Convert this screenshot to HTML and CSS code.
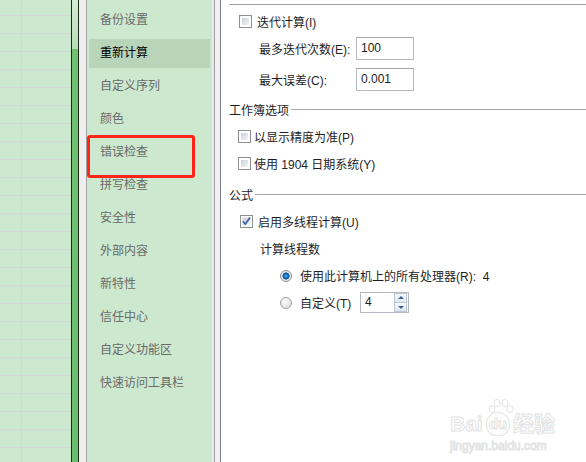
FILE: index.html
```html
<!DOCTYPE html>
<html>
<head>
  <meta charset="utf-8">
  <title>Excel 选项 - 公式</title>
  <link rel="stylesheet" href="styles.css">
</head>
<body>
  <div class="window">
    <!-- worksheet behind the dialog -->
    <div class="sheet"></div>
    <div class="splitter"></div>
    <div class="rail"></div>

    <ul class="nav">
      <li>备份设置</li>
      <li class="active">重新计算</li>
      <li>自定义序列</li>
      <li>颜色</li>
      <li>错误检查</li>
      <li>拼写检查</li>
      <li>安全性</li>
      <li>外部内容</li>
      <li>新特性</li>
      <li>信任中心</li>
      <li>自定义功能区</li>
      <li>快速访问工具栏</li>
      <li class="mark"></li>
    </ul>

    <div class="gutter"></div>

    <div class="content">
      <div class="rule"></div>

      <div class="row lead">
        <span class="box"></span>
        <span class="label-gap">迭代计算(I)</span>
      </div>
      <div class="row field">
        <span class="field-label">最多迭代次数(E):</span>
        <span class="text-input">100</span>
      </div>
      <div class="row field">
        <span class="field-label">最大误差(C):</span>
        <span class="text-input">0.001</span>
      </div>

      <div class="legend"><span>工作簿选项</span><span class="fill"></span></div>
      <div class="row check">
        <span class="box"></span>
        <span>以显示精度为准(P)</span>
      </div>
      <div class="row check">
        <span class="box"></span>
        <span>使用 1904 日期系统(Y)</span>
      </div>

      <div class="legend spaced"><span>公式</span><span class="fill"></span></div>
      <div class="row thread">
        <svg class="tick" width="13" height="13" viewBox="0 0 13 13">
          <defs>
            <linearGradient id="boxfill" x1="0" y1="0" x2="1" y2="1">
              <stop offset="0" stop-color="#c9ced8"/>
              <stop offset="1" stop-color="#f6f7f9"/>
            </linearGradient>
          </defs>
          <rect x="0.5" y="0.5" width="12" height="12" fill="#fff" stroke="#8e8f8f"/>
          <rect x="2.5" y="2.5" width="8" height="8" fill="url(#boxfill)"/>
          <path d="M3 6.2 L5.3 9 L10 2.6" fill="none" stroke="#4266b0" stroke-width="1.8"/>
        </svg>
        <span>启用多线程计算(U)</span>
      </div>
      <div class="row sub">计算线程数</div>
      <div class="row option">
        <span class="radio on"></span>
        <span>使用此计算机上的所有处理器(R):&nbsp; 4</span>
      </div>
      <div class="row option">
        <span class="radio"></span>
        <span class="option-label">自定义(T)</span>
        <span class="spin">
          <span class="spin-value">4</span>
          <span class="spin-buttons">
            <span class="spin-btn up"></span>
            <span class="spin-btn down"></span>
          </span>
        </span>
      </div>

      <div class="watermark">
        <svg class="paw" width="30" height="16" viewBox="0 0 30 16">
          <g fill="#fff" stroke="#e4e4e4">
            <ellipse cx="6" cy="11" rx="3" ry="3.5"/>
            <ellipse cx="11" cy="5" rx="3" ry="3.8"/>
            <ellipse cx="19" cy="5" rx="3" ry="3.8"/>
            <ellipse cx="24" cy="11" rx="3" ry="3.5"/>
          </g>
        </svg>
        <div class="wm-logo"><span>Bai</span><span class="wm-du">du</span><span>经验</span></div>
        <div class="wm-url">jingyan.baidu.com</div>
      </div>
    </div>
  </div>
</body>
</html>
```

FILE: styles.css
```css
body {
  margin: 0;
  font-family: "Liberation Sans", "Noto Sans CJK SC", sans-serif;
  font-size: 12px;
}
.window {
  display: flex;
  width: 586px;
  height: 462px;
  overflow: hidden;
}
.sheet {
  width: 71px;
  background-color: #cce8cf;
  background-image:
    linear-gradient(to right, transparent 21px, #d5d9d5 21px, #d5d9d5 22px, transparent 22px),
    repeating-linear-gradient(to bottom, transparent 0, transparent 15px, #d5d9d5 15px, #d5d9d5 16px, transparent 16px, transparent 18px);
}
.splitter {
  width: 6px;
  border-left: 1px solid #1c2a1c;
  border-right: 1px solid #1c2a1c;
  background: linear-gradient(to bottom, #d4ecd4 0, #b7dcb7 49px, #70c070 49px, #6cbd6c 100%);
}
.rail {
  width: 7px;
  background: #efefef;
  border-right: 1px solid #a2a2a2;
}
.nav {
  position: relative;
  width: 125px;
  margin: 0;
  padding: 6px 0 0;
  list-style: none;
  background: #cce8cf;
}
.nav li {
  height: 29px;
  margin: 0 2px 4px 2px;
  padding-left: 11px;
  line-height: 29px;
  color: #6a6a6a;
}
.nav li.active {
  background: #b8d5ba;
  color: #000;
}
.nav li.mark {
  position: absolute;
  left: 0;
  top: 135px;
  width: 108px;
  height: 43px;
  margin: 0;
  padding: 0;
  box-sizing: border-box;
  border: 3px solid #ff2418;
  border-radius: 3px;
}
.gutter {
  width: 9px;
  background: linear-gradient(to right, #e9e9e9 0, #e9e9e9 2px, #a0a0a0 2px, #a0a0a0 3px, #f0f0f0 3px, #f0f0f0 8px, #7e7e88 8px);
}
.content {
  position: relative;
  flex: 1;
  display: flex;
  flex-direction: column;
  padding: 4px 0 0 8px;
  background: #fff;
  color: #1e1e1e;
}
.rule {
  border-top: 1px solid #a0a0a0;
}
.row {
  display: flex;
  align-items: center;
  height: 27px;
}
.row.lead {
  height: 23px;
  margin-top: 5px;
  padding-left: 10px;
  gap: 5px;
}
.row.field {
  height: 31px;
  padding-left: 30px;
}
.field-label {
  width: 97px;
}
.text-input {
  box-sizing: border-box;
  width: 58px;
  height: 23px;
  padding-left: 4px;
  line-height: 21px;
  border: 1px solid #b5b8c0;
  border-top-color: #a3a6ae;
}
.legend {
  display: flex;
  align-items: center;
  height: 28px;
}
.legend.spaced {
  margin-top: 3px;
}
.legend .fill {
  flex: 1;
  margin-left: 2px;
  border-top: 1px solid #a8a8a8;
}
.row.check {
  padding-left: 9px;
  gap: 3px;
}
.row.thread {
  padding-left: 11px;
  gap: 5px;
}
.row.sub {
  padding-left: 31px;
}
.row.option {
  padding-left: 51px;
  gap: 8px;
}
.box {
  box-sizing: border-box;
  width: 13px;
  height: 13px;
  padding: 2px;
  border: 1px solid #8e8f8f;
  background: linear-gradient(135deg, #c9ced8, #f6f7f9) content-box, #fff;
}
.tick {
  display: block;
}
.radio {
  box-sizing: border-box;
  width: 12px;
  height: 12px;
  border: 1px solid #a3a3a3;
  border-radius: 50%;
  background: radial-gradient(circle at 40% 35%, #ffffff 0, #e6e6e6 60%, #cfcfcf 100%);
}
.radio.on {
  border-color: #8a8a8a;
  background: radial-gradient(circle at 50% 50%, #6cc6f4 0, #1a78c8 1.5px, #0b4f98 3.3px, #dcdcdc 3.8px, #f8f8f8 5px);
}
.option-label {
  width: 52px;
}
.spin {
  display: flex;
  box-sizing: border-box;
  width: 49px;
  height: 21px;
  border: 1px solid #b5b8c0;
}
.spin-value {
  flex: 1;
  padding-left: 4px;
  line-height: 19px;
}
.spin-buttons {
  display: flex;
  flex-direction: column;
  width: 13px;
  margin: 0 1px 0 0;
}
.spin-btn {
  flex: 1;
  position: relative;
  border: 1px solid #bac6d6;
  background: linear-gradient(to bottom, #f7f9fc, #dfe6ef);
}
.spin-btn + .spin-btn {
  border-top: none;
}
.spin-btn::after {
  content: "";
  position: absolute;
  left: 3px;
  top: 2px;
  border-left: 3px solid transparent;
  border-right: 3px solid transparent;
}
.spin-btn.up::after {
  border-bottom: 3px solid #3d5f94;
}
.spin-btn.down::after {
  top: 3px;
  border-top: 3px solid #3d5f94;
}
.watermark {
  position: absolute;
  left: 229px;
  top: 398px;
  color: #fff;
  font-family: "Liberation Sans", "Noto Sans CJK SC", sans-serif;
  font-weight: bold;
  -webkit-text-stroke: 1px #e4e4e4;
}
.paw {
  position: absolute;
  left: 36px;
  top: 0;
}
.wm-logo {
  display: flex;
  align-items: center;
  margin-top: 14px;
  font-size: 21px;
  line-height: 22px;
}
.wm-du {
  margin: 0 3px;
  padding: 0 2px;
  font-size: 15px;
  border: 1px solid #e4e4e4;
  border-radius: 50% 50% 45% 45%;
}
.wm-url {
  font-size: 12px;
  font-weight: normal;
  margin-top: 3px;
}
```
